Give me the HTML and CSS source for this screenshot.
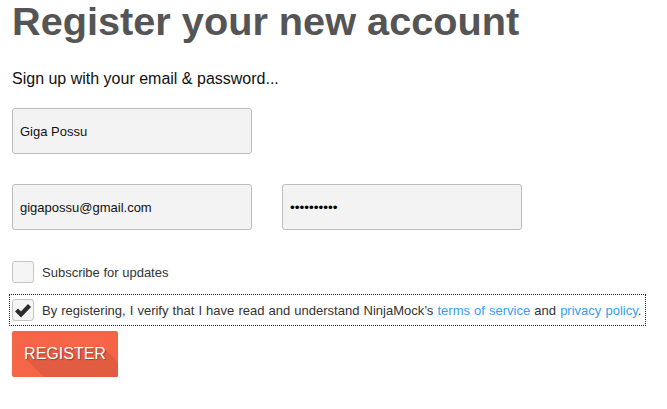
FILE: index.html
```html
<!DOCTYPE html>
<html>
<head>
<meta charset="utf-8">
<link rel="stylesheet" href="styles.css">
</head>
<body>
<div class="page">
  <h1 class="title">Register your new account</h1>
  <p class="lead">Sign up with your email &amp; password...</p>
  <div class="row">
    <div class="field">Giga Possu</div>
  </div>
  <div class="row two">
    <div class="field">gigapossu@gmail.com</div>
    <div class="field pw">••••••••••</div>
  </div>
  <div class="check-row">
    <span class="box"></span>
    <span class="label">Subscribe for updates</span>
  </div>
  <div class="check-row focused">
    <span class="box checked">
      <svg viewBox="0 0 20 20" width="20" height="20"><path d="M3.5 10 L8 14.5 L16.5 5.5" fill="none" stroke="#2b2b2b" stroke-width="4.2" stroke-linecap="butt" stroke-linejoin="miter"/></svg>
    </span>
    <span class="label">By registering, I verify that I have read and understand NinjaMock’s <a class="link">terms of service</a> and <a class="link">privacy policy</a>.</span>
  </div>
  <div class="btn"><span class="btn-text">REGISTER</span></div>
</div>
</body>
</html>
```
FILE: styles.css
```css
html, body { margin: 0; padding: 0; background: #fff; }
body { font-family: "Liberation Sans", Arial, sans-serif; }
.page { padding: 1px 12px 0; }
.title {
  margin: 0;
  font-size: 39.7px;
  line-height: 40px;
  font-weight: bold;
  color: #555;
}
.lead {
  margin: 28px 0 0 0;
  font-size: 16px;
  line-height: 20px;
  color: #111;
}
.row { display: flex; gap: 30px; margin-top: 19px; }
.row.two { margin-top: 30px; }
.field {
  box-sizing: border-box;
  width: 240px;
  height: 46px;
  background: #f3f3f3;
  border: 1px solid #bdbdbd;
  border-radius: 3px;
  padding: 0 7px;
  display: flex;
  align-items: center;
  font-size: 13px;
  color: #111;
}
.field.pw { font-size: 13.6px; color: #000; }
.check-row {
  display: flex;
  align-items: center;
  gap: 8px;
  margin-top: 31px;
  font-size: 13px;
  color: #333;
}
.check-row.focused {
  margin: 11px 9px 0 -3px;
  padding: 4px 2px 4px 2px;
  border: 1px dotted #222;
  word-spacing: 0.5px;
}
.box {
  box-sizing: border-box;
  width: 22px;
  height: 22px;
  border: 1px solid #c4c4c4;
  border-radius: 3px;
  background: #f5f5f5;
  display: flex;
  align-items: center;
  justify-content: center;
  flex: none;
}
.link { color: #3a9bf4; }
.btn {
  margin-top: 5px;
  width: 106px;
  height: 46px;
  box-sizing: border-box;
  border-radius: 2px;
  background: #f66547;
  color: #fff;
  font-size: 16px;
  display: flex;
  align-items: center;
  justify-content: center;
  overflow: hidden;
}
.btn-text {
  text-shadow:
    1px 1px 1px rgba(0,0,0,0.3),
    1px 1px 0 #e15c40, 2px 2px 0 #e15c40, 3px 3px 0 #e15c40, 4px 4px 0 #e15c40,
    5px 5px 0 #e15c40, 6px 6px 0 #e15c40, 7px 7px 0 #e15c40, 8px 8px 0 #e15c40,
    9px 9px 0 #e15c40, 10px 10px 0 #e15c40, 11px 11px 0 #e15c40, 12px 12px 0 #e15c40,
    13px 13px 0 #e15c40, 14px 14px 0 #e15c40, 15px 15px 0 #e15c40, 16px 16px 0 #e15c40,
    17px 17px 0 #e15c40, 18px 18px 0 #e15c40, 19px 19px 0 #e15c40, 20px 20px 0 #e15c40,
    21px 21px 0 #e15c40, 22px 22px 0 #e15c40, 23px 23px 0 #e15c40, 24px 24px 0 #e15c40,
    25px 25px 0 #e15c40, 26px 26px 0 #e15c40, 27px 27px 0 #e15c40, 28px 28px 0 #e15c40;
}
```
